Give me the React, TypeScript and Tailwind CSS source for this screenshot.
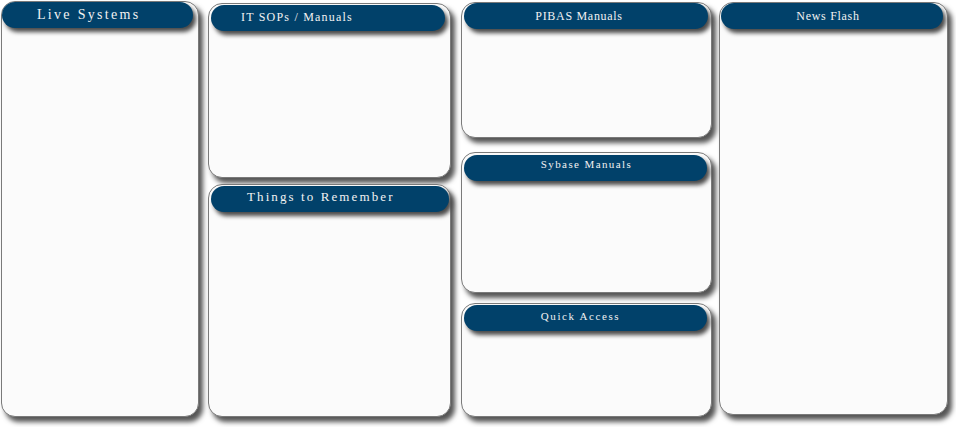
import React from "react";

type PanelProps = {
  title: string;
  box: string;
  head: string;
  text: string;
};

function Panel({ title, box, head, text }: PanelProps) {
  return (
    <div
      className={
        "relative rounded-[14px] border border-[#7a7a7a] bg-[#fbfbfb] shadow-[4px_5px_5px_#555555] " +
        box
      }
    >
      <div
        className={
          "flex h-[26px] items-center rounded-[13px] bg-[#01416a] shadow-[3px_4px_4px_#4a4a4a] " +
          head
        }
      >
        <span
          className={"whitespace-nowrap text-[#f2f2f2] leading-none " + text}
          style={{ fontFamily: '"Liberation Serif", "DejaVu Serif", serif' }}
        >
          {title}
        </span>
      </div>
    </div>
  );
}

export default function App() {
  return (
    <div className="h-[427px] w-[956px] overflow-hidden bg-white">
      <div className="flex items-start pl-[1px]">
        {/* Column 1 */}
        <div className="w-[198px] pt-[1px]">
          <Panel
            title="Live Systems"
            box="h-[416px]"
            head="ml-[0px] mr-[5px] mt-[0px] pl-[35px] pb-[0px]"
            text="text-[14px] tracking-[2.3px]"
          />
        </div>
        {/* Column 2 */}
        <div className="ml-[9px] flex w-[243px] flex-col pt-[3px]">
          <Panel
            title="IT SOPs / Manuals"
            box="h-[175px]"
            head="ml-[2px] mr-[5px] mt-[1px] pl-[30px] pb-[3px]"
            text="text-[12px] tracking-[1.2px]"
          />
          <div className="mt-[6px]">
            <Panel
              title="Things to Remember"
              box="h-[233px]"
              head="ml-[2px] mr-[1px] mt-[1px] pl-[36px] pb-[5px]"
              text="text-[13px] tracking-[2.1px]"
            />
          </div>
        </div>
        {/* Column 3 */}
        <div className="ml-[10px] flex w-[251px] flex-col pt-[2px]">
          <Panel
            title="PIBAS Manuals"
            box="h-[136px]"
            head="ml-[2px] mr-[3px] mt-[0px] justify-center pr-[14px] pb-[1px]"
            text="text-[12px] tracking-[0.7px]"
          />
          <div className="mt-[14px]">
            <Panel
              title="Sybase Manuals"
              box="h-[141px]"
              head="ml-[2px] mr-[4px] mt-[2px] justify-center pl-[2px] pb-[8px]"
              text="text-[11px] tracking-[1.4px]"
            />
          </div>
          <div className="mt-[10px]">
            <Panel
              title="Quick Access"
              box="h-[114px]"
              head="ml-[2px] mr-[4px] mt-[1px] justify-center pr-[10px] pb-[4px]"
              text="text-[11px] tracking-[1.6px]"
            />
          </div>
        </div>
        {/* Column 4 */}
        <div className="ml-[7px] w-[229px] pt-[2px]">
          <Panel
            title="News Flash"
            box="h-[413px]"
            head="ml-[1px] mr-[4px] mt-[0px] justify-center pr-[8px] pb-[1px]"
            text="text-[12px] tracking-[0.7px]"
          />
        </div>
      </div>
    </div>
  );
}
